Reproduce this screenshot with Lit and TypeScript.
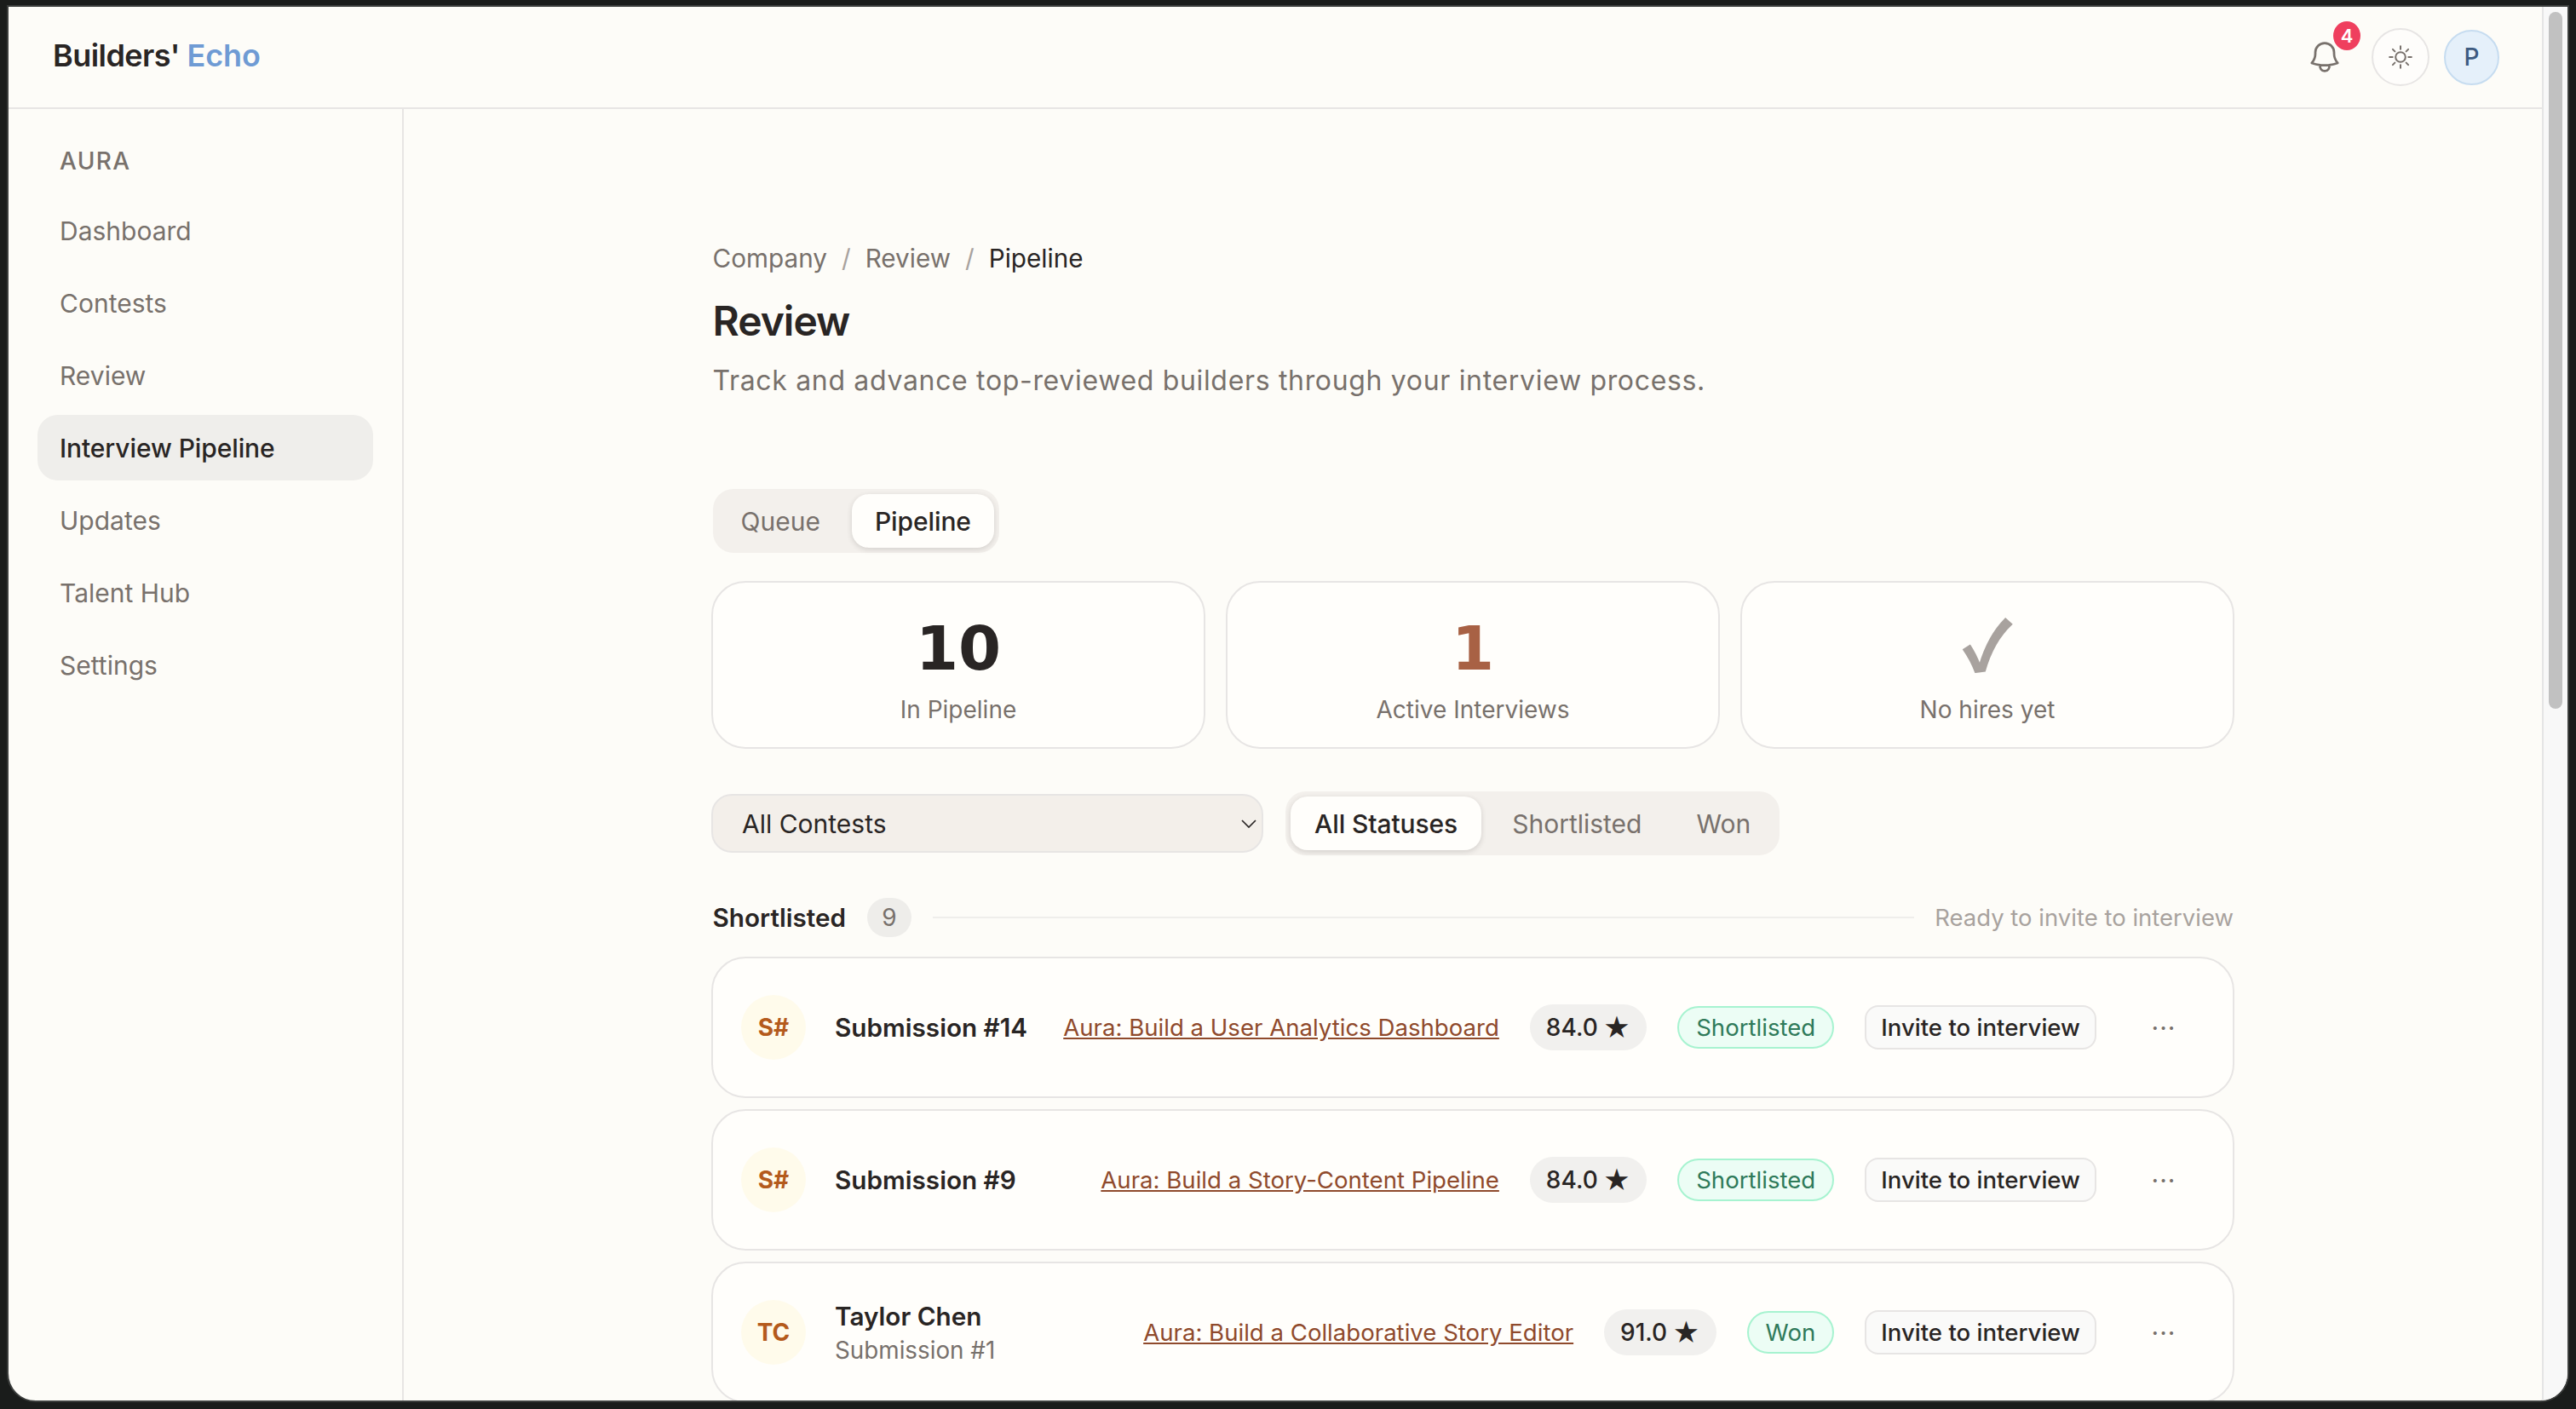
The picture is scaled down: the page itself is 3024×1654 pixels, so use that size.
import { LitElement, html, css } from "lit";
import { customElement } from "lit/decorators.js";

interface Row { av: string; name: string; sub?: string; link: string; score: string; status: string; }

const NAV = ["Dashboard", "Contests", "Review", "Interview Pipeline", "Updates", "Talent Hub", "Settings"];
const ROWS: Row[] = [
  { av: "S#", name: "Submission #14", link: "Aura: Build a User Analytics Dashboard", score: "84.0", status: "Shortlisted" },
  { av: "S#", name: "Submission #9", link: "Aura: Build a Story-Content Pipeline", score: "84.0", status: "Shortlisted" },
  { av: "TC", name: "Taylor Chen", sub: "Submission #1", link: "Aura: Build a Collaborative Story Editor", score: "91.0", status: "Won" },
];

@customElement("app-root")
export class AppRoot extends LitElement {
  static styles = css`
    :host { display: block; height: 1654px; box-sizing: border-box; background: #1a1c1b; padding: 6px 8px 8px; font-family: Inter, "Liberation Sans", sans-serif; color: #292524; overflow: hidden; }
    * { box-sizing: border-box; }
    .window { height: 1640px; border: 2px solid #3c3e3d; border-radius: 0 0 34px 34px; overflow: hidden; display: flex; background: #fdfcf8; }
    .app { flex: 1; min-width: 0; display: flex; flex-direction: column; height: 100%; }
    .scroll { width: 30px; flex: none; background: #f8f8f8; border-left: 2px solid #e5e5e5; padding: 6px 6px 0 6px; }
    .thumb { width: 16px; height: 818px; border-radius: 8px; background: #c1c1c1; }
    header { height: 120px; flex: none; border-bottom: 2px solid #e7e5e4; display: flex; align-items: center; padding: 0 50px 0 52px; }
    .logo { font-size: 36px; font-weight: 600; letter-spacing: -0.55px; color: #292524; padding-bottom: 5px; }
    .logo span { color: #6f9bd4; letter-spacing: -0.1px; }
    .hright { margin-left: auto; display: flex; align-items: center; }
    .bell { position: relative; width: 44px; height: 44px; margin-right: 33px; color: #78716c; display: flex; }
    .dot { position: absolute; left: 32px; top: -20px; width: 32px; height: 34px; border-radius: 50%; background: #ef3f5e; color: #fff; font-size: 22px; font-weight: 600; display: flex; align-items: center; justify-content: center; }
    .sun { width: 68px; height: 68px; border-radius: 50%; border: 2px solid #e7e5e4; background: #fefdfb; color: #78716c; display: flex; align-items: center; justify-content: center; margin-right: 17px; }
    .me { width: 65px; height: 65px; border-radius: 50%; border: 2px solid #c6dcf0; background: #e5f0fa; color: #3d5a80; font-size: 28px; font-weight: 500; display: flex; align-items: center; justify-content: center; }
    .body { flex: 1; min-height: 0; display: flex; }
    aside { width: 464px; flex: none; border-right: 2px solid #e7e5e4; padding: 40px 34px 0; display: flex; flex-direction: column; gap: 8px; }
    .group { font-size: 28px; font-weight: 500; letter-spacing: 1.4px; color: #78716c; padding: 0 26px; height: 42px; line-height: 42px; margin-bottom: 14px; }
    .nav { height: 77px; border-radius: 24px; padding: 0 26px; display: flex; align-items: center; font-size: 30px; color: #78716c; }
    .nav.on { background: #efeeeb; color: #292524; font-weight: 500; letter-spacing: -0.1px; }
    main { flex: 1; min-width: 0; overflow: hidden; display: flex; justify-content: center; padding-top: 153px; }
    .col { width: 1788px; flex: none; }
    .crumbs { display: flex; gap: 17px; font-size: 29.7px; color: #78716c; height: 44px; line-height: 44px; padding-left: 1.5px; }
    .crumbs .sep { color: #a8a29e; }
    .crumbs .cur { color: #292524; }
    h1 { margin: 22px 0 0; padding-left: 1.5px; font-size: 48px; line-height: 60px; font-weight: 600; letter-spacing: -1px; color: #292524; }
    .desc { margin: 14px 0 0; padding-left: 1.5px; font-size: 32px; letter-spacing: 0.67px; line-height: 52px; color: #78716c; }
    .seg { display: inline-flex; background: #f3f0ec; padding: 6px; border-radius: 24px; align-items: center; gap: 8px; }
    .seg button { border: 0; background: none; font: inherit; font-size: 30px; color: #78716c; height: 63px; padding: 0 28px; border-radius: 20px; }
    .seg button.on { background: #fffefb; color: #292524; font-weight: 500; letter-spacing: -0.1px; box-shadow: 0 2px 6px rgba(41, 37, 36, .16); }
    .tabs { margin-top: 101px; display: flex; padding-left: 1.5px; }
    .tabs .seg { gap: 10px; }
    .tabs button { padding: 0 27px; }
    .stats { display: grid; grid-template-columns: repeat(3, 1fr); gap: 24px; margin-top: 33px; }
    .stat { height: 197px; border: 2px solid #e7e5e4; border-radius: 40px; background: #fffefb; display: flex; flex-direction: column; align-items: center; padding-top: 29px; }
    .num { font-family: "DejaVu Sans", sans-serif; font-weight: 700; font-size: 72px; line-height: 96px; height: 96px; color: #292524; }
    .num.act { color: #a86144; }
    .num.ok { color: #a8a29e; font-family: "Noto Sans CJK SC", "DejaVu Sans", sans-serif; font-size: 78px; line-height: 80px; -webkit-text-stroke: 2px #a8a29e; }
    .lab { font-size: 28px; line-height: 44px; color: #78716c; margin-top: 2px; }
    .filters { display: flex; align-items: center; gap: 26px; margin-top: 50px; }
    .select { width: 648px; height: 69px; border-radius: 24px; border: 2px solid #e7e5e4; background: #f3efea; display: flex; align-items: center; padding: 0 6px 0 34px; font-size: 30px; color: #292524; justify-content: space-between; }
    .sechead { display: flex; align-items: center; margin-top: 49px; height: 48px; padding: 0 1px 0 1.5px; }
    .sechead b { font-size: 29.7px; font-weight: 600; }
    .count { width: 52px; height: 46px; border-radius: 23px; background: #eeedea; color: #78716c; font-size: 28px; display: flex; align-items: center; justify-content: center; margin-left: 25px; }
    .rule { flex: 1; height: 2px; background: #efeeeb; margin: 0 24px 0 25px; }
    .hint { font-size: 27.5px; color: #a8a29e; }
    .rows { margin-top: 22px; display: flex; flex-direction: column; gap: 13px; }
    .row { height: 166px; flex: none; border: 2px solid #e7e5e4; border-radius: 40px; background: #fffefb; display: flex; align-items: center; padding: 0 36px 0 33px; white-space: nowrap; }
    .av { width: 76px; height: 76px; border-radius: 50%; background: #fffbeb; color: #b45a1c; font-size: 28px; font-weight: 700; display: flex; align-items: center; justify-content: center; flex: none; }
    .who { margin-left: 34px; display: flex; flex-direction: column; }
    .who b { font-size: 29.7px; font-weight: 600; line-height: 42px; color: #292524; }
    .who span { font-size: 27.8px; line-height: 38px; color: #78716c; }
    .link { margin-left: auto; font-size: 27.6px; color: #8f4a2c; text-decoration: underline; }
    .score { margin-left: 36px; height: 54px; padding: 0 19px; border-radius: 27px; background: #f1f0ee; font-size: 28px; font-weight: 500; display: flex; align-items: center; gap: 6px; color: #292524; }
    .score span { font-size: 31px; line-height: 1; }
    .status { margin-left: 36px; height: 50px; padding: 0 20px; border-radius: 25px; background: #ecfdf5; border: 2px solid #a7f3d0; color: #2f7a5a; font-size: 27.6px; display: flex; align-items: center; }
    .invite { margin-left: 36px; height: 52px; padding: 0 17px; border-radius: 16px; border: 2px solid #e7e5e4; background: #fafaf9; font-size: 27.6px; font-weight: 500; display: flex; align-items: center; color: #292524; }
    .more { margin-left: 34px; width: 90px; text-align: center; font-size: 30px; letter-spacing: 1px; color: #78716c; }
  `;

  render() {
    return html`<div class="window">
      <div class="app">
        <header>
          <div class="logo">Builders' <span>Echo</span></div>
          <div class="hright">
            <div class="bell">
              <svg width="44" height="44" viewBox="0 0 24 24" fill="none" stroke="currentColor" stroke-width="1.5" stroke-linecap="round" stroke-linejoin="round"><path d="M14.857 17.082a23.848 23.848 0 005.454-1.31A8.967 8.967 0 0118 9.75v-.7V9A6 6 0 006 9v.75a8.967 8.967 0 01-2.312 6.022c1.733.64 3.56 1.085 5.455 1.31m5.714 0a24.255 24.255 0 01-5.714 0m5.714 0a3 3 0 11-5.714 0"/></svg>
              <div class="dot">4</div>
            </div>
            <div class="sun">
              <svg width="28" height="28" viewBox="0 0 24 24" fill="none" stroke="currentColor" stroke-width="1.75" stroke-linecap="round"><circle cx="12" cy="12" r="5"/><path d="M12 1v3M12 20v3M4.2 4.2l2.1 2.1M17.7 17.7l2.1 2.1M1 12h3M20 12h3M4.2 19.8l2.1-2.1M17.7 6.3l2.1-2.1"/></svg>
            </div>
            <div class="me">P</div>
          </div>
        </header>
        <div class="body">
          <aside>
            <div class="group">AURA</div>
            ${NAV.map((n) => html`<div class="nav ${n === "Interview Pipeline" ? "on" : ""}">${n}</div>`)}
          </aside>
          <main>
            <div class="col">
              <div class="crumbs"><span>Company</span><span class="sep">/</span><span>Review</span><span class="sep">/</span><span class="cur">Pipeline</span></div>
              <h1>Review</h1>
              <p class="desc">Track and advance top-reviewed builders through your interview process.</p>
              <div class="tabs"><div class="seg"><button>Queue</button><button class="on">Pipeline</button></div></div>
              <div class="stats">
                <div class="stat"><div class="num">10</div><div class="lab">In Pipeline</div></div>
                <div class="stat"><div class="num act">1</div><div class="lab">Active Interviews</div></div>
                <div class="stat"><div class="num ok">✓</div><div class="lab">No hires yet</div></div>
              </div>
              <div class="filters">
                <div class="select"><span>All Contests</span>
                  <svg width="18" height="10" viewBox="0 0 18 10" fill="none" stroke="#292524" stroke-width="1.7"><path d="M1 1l8 8 8-8"/></svg>
                </div>
                <div class="seg"><button class="on">All Statuses</button><button>Shortlisted</button><button>Won</button></div>
              </div>
              <div class="sechead"><b>Shortlisted</b><span class="count">9</span><span class="rule"></span><span class="hint">Ready to invite to interview</span></div>
              <div class="rows">
                ${ROWS.map((r) => html`<div class="row">
                  <div class="av">${r.av}</div>
                  <div class="who"><b>${r.name}</b>${r.sub ? html`<span>${r.sub}</span>` : ""}</div>
                  <a class="link">${r.link}</a>
                  <div class="score">${r.score} <span>★</span></div>
                  <div class="status">${r.status}</div>
                  <div class="invite">Invite to interview</div>
                  <div class="more">···</div>
                </div>`)}
              </div>
            </div>
          </main>
        </div>
      </div>
      <div class="scroll"><div class="thumb"></div></div>
    </div>`;
  }
}
